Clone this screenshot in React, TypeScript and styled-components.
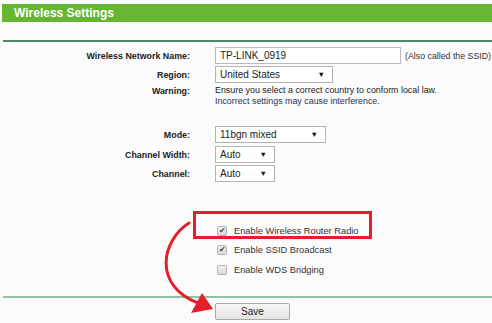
import { createGlobalStyle, styled } from "styled-components";

const GlobalStyle = createGlobalStyle`
  html, body {
    margin: 0;
    padding: 0;
    background: #fbfbfb;
  }
  body {
    font-family: "Liberation Sans", Arial, sans-serif;
    color: #222;
  }
`;

const Page = styled.div`
  position: relative;
  width: 492px;
  height: 323px;
  overflow: hidden;
  padding-top: 4px;
  box-sizing: border-box;
`;

const TitleBar = styled.div`
  margin-left: 2px;
  height: 18px;
  background: #66b632;
  display: flex;
  align-items: center;
  padding-left: 12px;
  color: #fff;
  font-weight: bold;
  font-size: 12px;
`;

const Rule = styled.div<{ $color: string; $top: number }>`
  margin: ${(p) => p.$top}px 0 0 3px;
  height: 2px;
  background: ${(p) => p.$color};
`;

const Form = styled.div`
  display: grid;
  grid-template-columns: 190px 1fr;
  column-gap: 25px;
  align-items: center;
  margin-top: 5px;
`;

const Label = styled.div<{ $mt?: number; $top?: boolean }>`
  text-align: right;
  font-weight: bold;
  font-size: 8.9px;
  color: #222;
  align-self: ${(p) => (p.$top ? "start" : "center")};
  margin-top: ${(p) => p.$mt ?? 0}px;
`;

const Field = styled.div<{ $mt?: number }>`
  display: flex;
  align-items: center;
  gap: 4px;
  height: 17px;
  margin-top: ${(p) => p.$mt ?? 0}px;
  white-space: nowrap;
`;

const TextInput = styled.div`
  box-sizing: border-box;
  width: 186px;
  flex-shrink: 0;
  height: 17px;
  border: 1px solid #b9b9b9;
  background: #fff;
  font-size: 10px;
  padding-left: 4px;
  display: flex;
  align-items: center;
`;

const Hint = styled.span`
  font-size: 8.8px;
  color: #333;
  white-space: nowrap;
`;

const Select = styled.div<{ $w: number }>`
  box-sizing: border-box;
  width: ${(p) => p.$w}px;
  height: 17px;
  border: 1px solid #b3b3b3;
  background: #fff;
  font-size: 10px;
  padding: 0 7px 0 4px;
  display: flex;
  align-items: center;
  justify-content: space-between;
`;

const Caret = styled.span`
  font-size: 7.5px;
  color: #111;
`;

const Warning = styled.div`
  font-size: 8.9px;
  line-height: 11px;
  color: #222;
  align-self: start;
  margin-top: 2px;
  white-space: nowrap;
`;

const BlueLine = styled.div`
  color: #2a3358;
`;

const Checks = styled.div`
  grid-column: 2;
  display: flex;
  flex-direction: column;
  margin-top: 39px;
`;

const CheckRow = styled.div`
  display: flex;
  align-items: center;
  height: 19.5px;
  padding-left: 2px;
  font-size: 9.3px;
  color: #333;
`;

const Box = styled.span`
  box-sizing: border-box;
  width: 10px;
  height: 10px;
  border: 1px solid #b5b5b5;
  border-radius: 2px;
  background: linear-gradient(#f0f0f0, #d8d8d8);
  margin-right: 7px;
  display: flex;
  align-items: center;
  justify-content: center;
  font-size: 8px;
  line-height: 1;
  color: #444;
`;

const Footer = styled.div`
  display: flex;
  padding-left: 215px;
  margin-top: 5px;
`;

const SaveButton = styled.div`
  box-sizing: border-box;
  width: 75px;
  height: 17px;
  border: 1px solid #a9a9a9;
  border-radius: 2px;
  background: linear-gradient(#f9f9f9, #e3e3e3);
  font-size: 10px;
  color: #222;
  display: flex;
  align-items: center;
  justify-content: center;
`;

const Highlight = styled.div`
  position: absolute;
  left: 193px;
  top: 211px;
  width: 179px;
  height: 28px;
  box-sizing: border-box;
  border: 3px solid #e51e2a;
`;

const ArrowLayer = styled.svg`
  position: absolute;
  left: 0;
  top: 0;
  pointer-events: none;
`;

function Check({ on, label }: { on: boolean; label: string }) {
  return (
    <CheckRow>
      <Box>{on ? "✔" : ""}</Box>
      {label}
    </CheckRow>
  );
}

export default function App() {
  return (
    <Page>
      <GlobalStyle />
      <TitleBar>Wireless Settings</TitleBar>
      <Rule $color="#4c8a68" $top={18} />
      <Form>
        <Label>Wireless Network Name:</Label>
        <Field>
          <TextInput>TP-LINK_0919</TextInput>
          <Hint>(Also called the SSID)</Hint>
        </Field>

        <Label $mt={2}>Region:</Label>
        <Field $mt={2}>
          <Select $w={118}>
            United States
            <Caret>▼</Caret>
          </Select>
        </Field>

        <Label $top $mt={3}>
          Warning:
        </Label>
        <Warning>
          Ensure you select a correct country to conform local law.
          <BlueLine>Incorrect settings may cause interference.</BlueLine>
        </Warning>

        <Label $mt={19}>Mode:</Label>
        <Field $mt={19}>
          <Select $w={111}>
            11bgn mixed
            <Caret>▼</Caret>
          </Select>
        </Field>

        <Label $mt={3}>Channel Width:</Label>
        <Field $mt={3}>
          <Select $w={60}>
            Auto
            <Caret>▼</Caret>
          </Select>
        </Field>

        <Label $mt={2}>Channel:</Label>
        <Field $mt={2}>
          <Select $w={60}>
            Auto
            <Caret>▼</Caret>
          </Select>
        </Field>

        <Checks>
          <Check on label="Enable Wireless Router Radio" />
          <Check on label="Enable SSID Broadcast" />
          <Check on={false} label="Enable WDS Bridging" />
        </Checks>
      </Form>
      <Rule $color="#8fc3a2" $top={16} />
      <Footer>
        <SaveButton>Save</SaveButton>
      </Footer>

      <Highlight />
      <ArrowLayer width="492" height="323" viewBox="0 0 492 323">
        <path
          d="M 189 223 C 162 240, 152 285, 198 303"
          fill="none"
          stroke="#e51e2a"
          strokeWidth="3"
          strokeLinecap="round"
        />
        <polygon points="213,309 191,313 202,293" fill="#e51e2a" />
      </ArrowLayer>
    </Page>
  );
}
